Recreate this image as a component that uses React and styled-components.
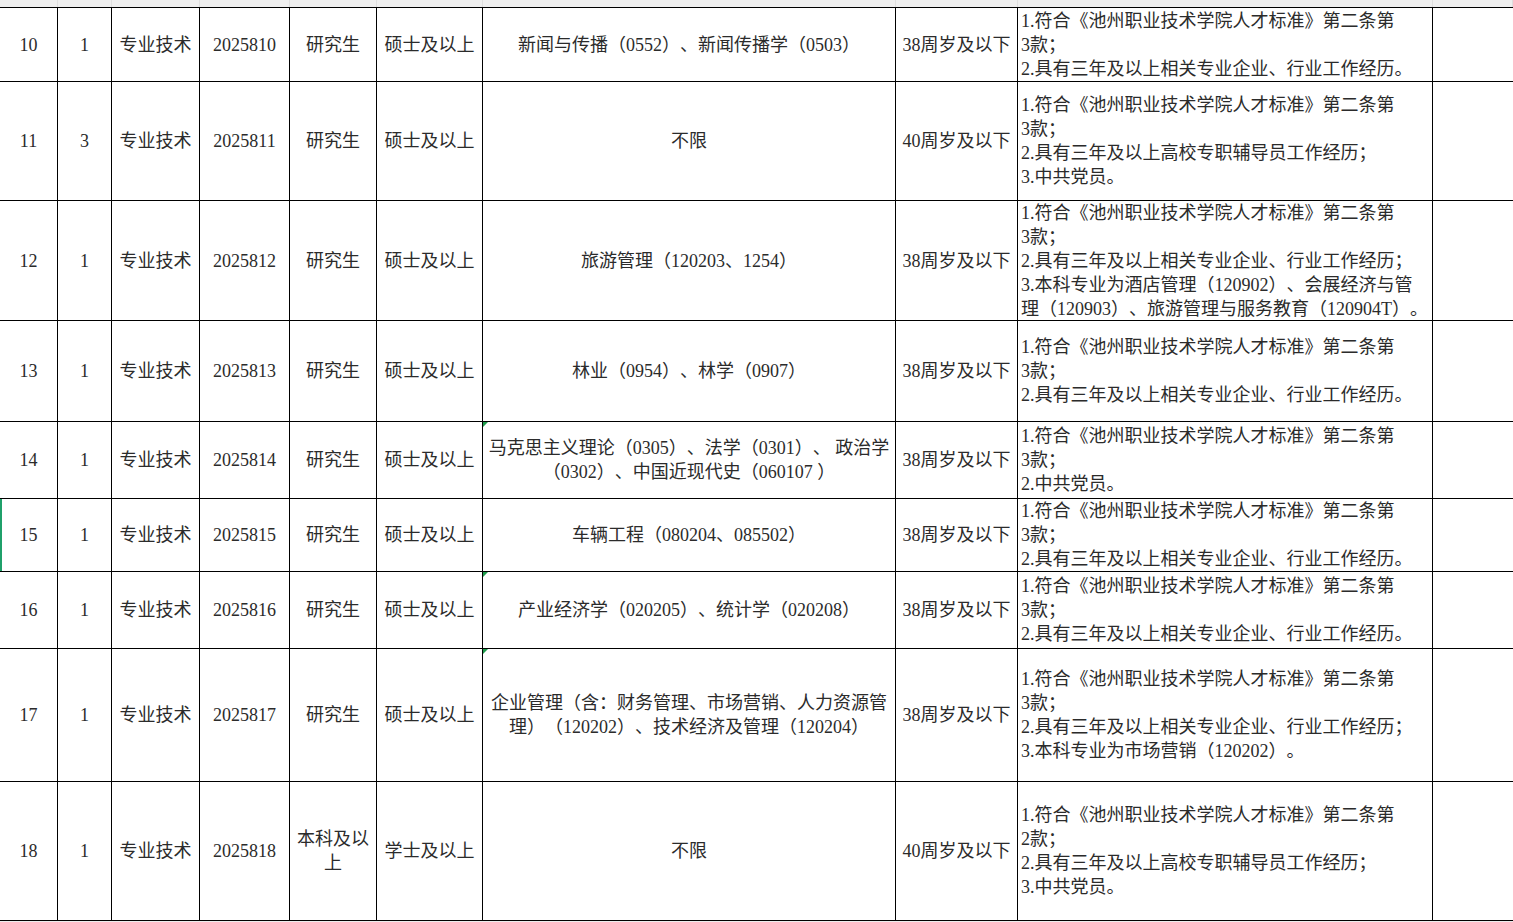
import styled, { createGlobalStyle } from "styled-components";

const GlobalStyle = createGlobalStyle`
  html, body {
    margin: 0;
    padding: 0;
    background: #ececec;
    overflow: hidden;
  }
`;

const COLS = "58px 54px 88px 90px 87px 106px 413px 122px 415px 1fr";

const Sheet = styled.div`
  width: 1513px;
  height: 922px;
  background: #ececec;
  font-family: "Liberation Serif", "Noto Sans CJK SC", serif;
  font-size: 18px;
  line-height: 24px;
  color: #2b2b2b;
  text-spacing-trim: space-all;
`;

const TopStrip = styled.div`
  display: grid;
  grid-template-columns: ${COLS};
  height: 8px;
  box-sizing: border-box;
  border-bottom: 1px solid #000;
  background: #efefef;
`;

const StripCell = styled.div`
  border-right: 1px solid #dedede;
`;

const Row = styled.div`
  display: grid;
  grid-template-columns: ${COLS};
  height: ${(p) => p.$h}px;
  box-sizing: border-box;
  border-bottom: 1px solid #000;
  background: #fff;
`;

const Cell = styled.div`
  position: relative;
  box-sizing: border-box;
  border-right: ${(p) => (p.$last ? "none" : "1px solid #000")};
  display: flex;
  flex-direction: column;
  justify-content: center;
  align-items: ${(p) => (p.$left ? "flex-start" : "center")};
  text-align: ${(p) => (p.$left ? "left" : "center")};
  padding-left: ${(p) => (p.$left ? "3px" : "0")};
  overflow: hidden;
  box-shadow: ${(p) => (p.$selected ? "inset 2px 0 0 #1fa06a" : "none")};

  &::before {
    content: "";
    display: ${(p) => (p.$flag ? "block" : "none")};
    position: absolute;
    left: 0;
    top: 0;
    border-top: 5px solid #1e9b4b;
    border-right: 5px solid transparent;
  }
`;

const Line = styled.div`
  white-space: nowrap;
`;

const STD3 = "1.符合《池州职业技术学院人才标准》第二条第";

const rows = [
  {
    no: "10", n: "1", code: "2025810", edu: ["研究生"], deg: "硕士及以上",
    major: ["新闻与传播（0552）、新闻传播学（0503）"], age: "38周岁及以下",
    req: [STD3, "3款；", "2.具有三年及以上相关专业企业、行业工作经历。"], h: 74,
  },
  {
    no: "11", n: "3", code: "2025811", edu: ["研究生"], deg: "硕士及以上",
    major: ["不限"], age: "40周岁及以下",
    req: [STD3, "3款；", "2.具有三年及以上高校专职辅导员工作经历；", "3.中共党员。"], h: 119,
  },
  {
    no: "12", n: "1", code: "2025812", edu: ["研究生"], deg: "硕士及以上",
    major: ["旅游管理（120203、1254）"], age: "38周岁及以下",
    req: [
      STD3, "3款；", "2.具有三年及以上相关专业企业、行业工作经历；",
      "3.本科专业为酒店管理（120902）、会展经济与管",
      "理（120903）、旅游管理与服务教育（120904T）。",
    ], h: 120,
  },
  {
    no: "13", n: "1", code: "2025813", edu: ["研究生"], deg: "硕士及以上",
    major: ["林业（0954）、林学（0907）"], age: "38周岁及以下",
    req: [STD3, "3款；", "2.具有三年及以上相关专业企业、行业工作经历。"], h: 101,
  },
  {
    no: "14", n: "1", code: "2025814", edu: ["研究生"], deg: "硕士及以上",
    major: ["马克思主义理论（0305）、法学（0301）、 政治学", "（0302）、中国近现代史（060107 ）"],
    flag: true, age: "38周岁及以下",
    req: [STD3, "3款；", "2.中共党员。"], h: 77,
  },
  {
    no: "15", n: "1", code: "2025815", edu: ["研究生"], deg: "硕士及以上",
    major: ["车辆工程（080204、085502）"], age: "38周岁及以下", selected: true,
    req: [STD3, "3款；", "2.具有三年及以上相关专业企业、行业工作经历。"], h: 73,
  },
  {
    no: "16", n: "1", code: "2025816", edu: ["研究生"], deg: "硕士及以上",
    major: ["产业经济学（020205）、统计学（020208）"], flag: true, age: "38周岁及以下",
    req: [STD3, "3款；", "2.具有三年及以上相关专业企业、行业工作经历。"], h: 77,
  },
  {
    no: "17", n: "1", code: "2025817", edu: ["研究生"], deg: "硕士及以上",
    major: ["企业管理（含：财务管理、市场营销、人力资源管", "理）（120202）、技术经济及管理（120204）"],
    flag: true, age: "38周岁及以下",
    req: [STD3, "3款；", "2.具有三年及以上相关专业企业、行业工作经历；", "3.本科专业为市场营销（120202）。"], h: 133,
  },
  {
    no: "18", n: "1", code: "2025818", edu: ["本科及以", "上"], deg: "学士及以上",
    major: ["不限"], age: "40周岁及以下",
    req: [STD3, "2款；", "2.具有三年及以上高校专职辅导员工作经历；", "3.中共党员。"], h: 139,
  },
];

const lines = (arr) => arr.map((t, i) => <Line key={i}>{t}</Line>);

export default function App() {
  return (
    <Sheet>
      <GlobalStyle />
      <TopStrip>
        {Array.from({ length: 10 }).map((_, i) => (
          <StripCell key={i} />
        ))}
      </TopStrip>
      {rows.map((r) => (
        <Row key={r.no} $h={r.h}>
          <Cell $selected={r.selected}>{r.no}</Cell>
          <Cell>{r.n}</Cell>
          <Cell>专业技术</Cell>
          <Cell>{r.code}</Cell>
          <Cell>{lines(r.edu)}</Cell>
          <Cell>{r.deg}</Cell>
          <Cell $flag={r.flag}>{lines(r.major)}</Cell>
          <Cell>{r.age}</Cell>
          <Cell $left>{lines(r.req)}</Cell>
          <Cell $last />
        </Row>
      ))}
    </Sheet>
  );
}
